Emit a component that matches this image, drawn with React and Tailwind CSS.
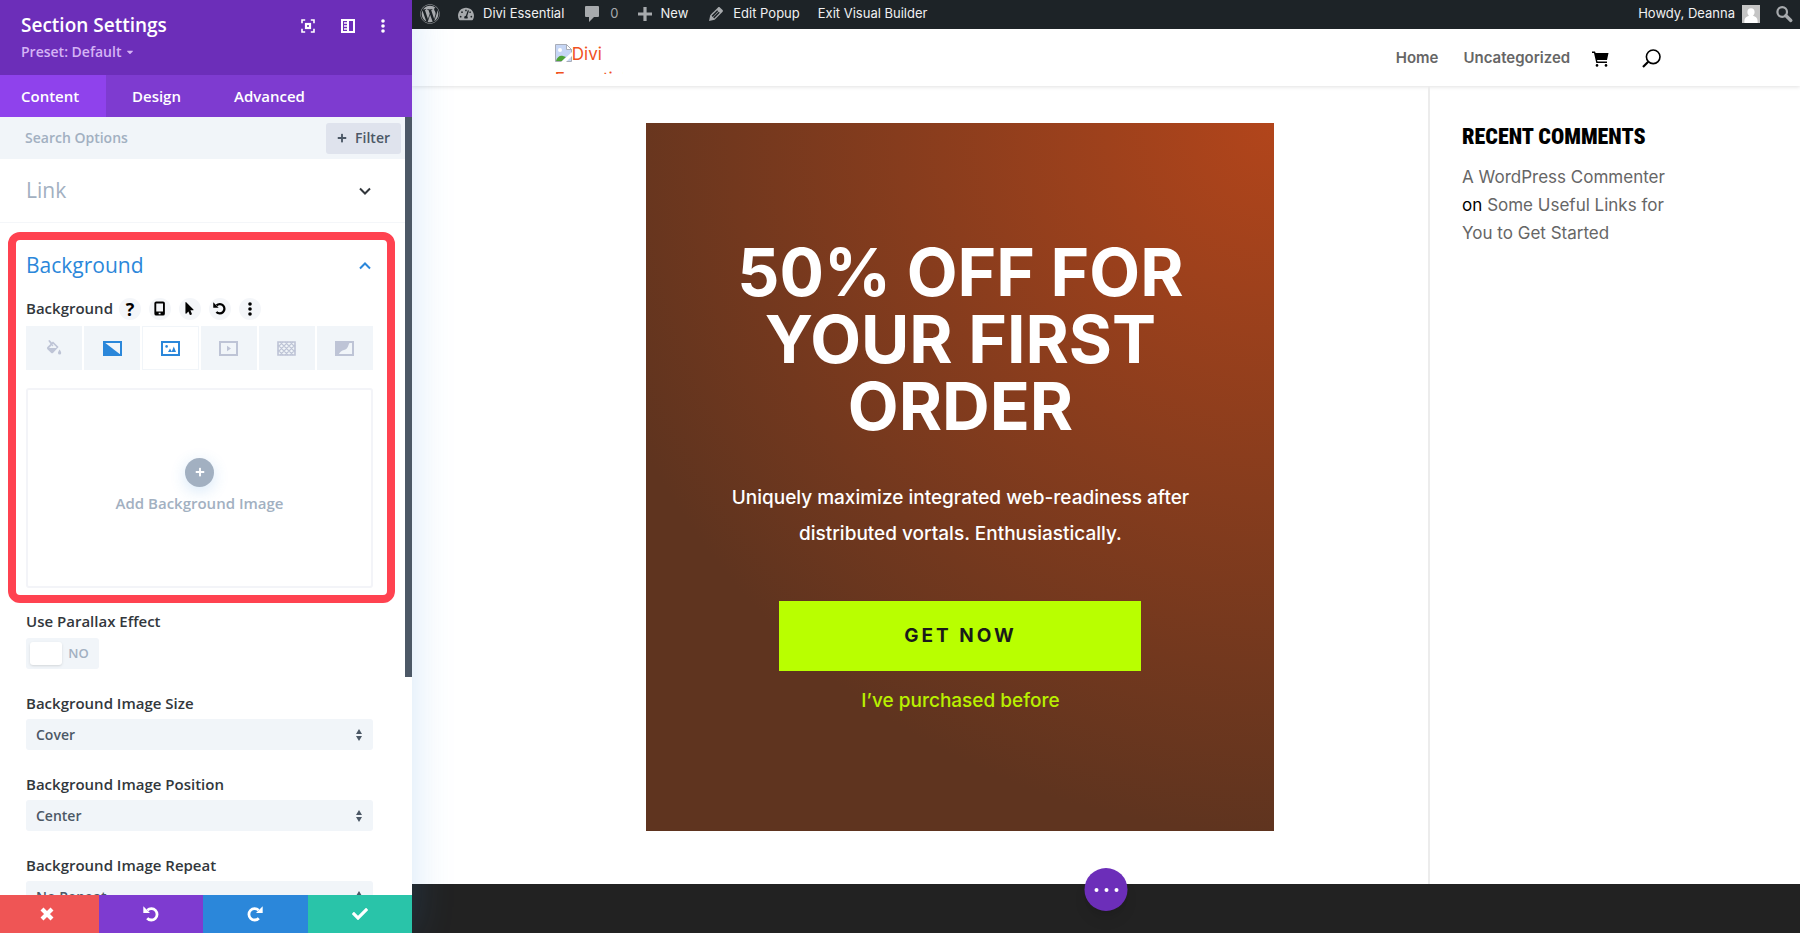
import { useState } from "react";
import {
  FaCaretDown,
  FaCheck,
  FaMousePointer,
  FaPlus,
  FaTachometerAlt,
  FaWordpress,
} from "react-icons/fa";

const sizes = ["Cover", "Fit", "Actual Size"];
const positions = ["Center", "Top Left", "Top Center", "Bottom Center"];
const repeats = ["No Repeat", "Repeat", "Space", "Round"];

const UndoIcon = ({ className }) => (
  <svg viewBox="0 0 16 16" className={className} fill="none" stroke="currentColor" strokeWidth="2.8" aria-hidden="true">
    <path d="M4.4 4.2A5.7 5.7 0 1 1 4.2 12.2" />
    <path d="M0.3 0.3V7H7z" fill="currentColor" stroke="none" />
  </svg>
);

const CloseIcon = () => (
  <svg viewBox="0 0 14 14" className="size-3.5" fill="none" stroke="currentColor" strokeWidth="4.2" aria-hidden="true">
    <path d="M2 2l10 10M12 2L2 12" />
  </svg>
);

const FocusIcon = () => (
  <svg viewBox="0 0 14 14" className="size-3.5" fill="none" stroke="currentColor" strokeWidth="1.6" aria-hidden="true">
    <path d="M1 4.2V1h3.2M9.8 1H13v3.2M13 9.8V13H9.8M4.2 13H1V9.8" />
    <rect x="5" y="5" width="4" height="4" strokeWidth="2.2" />
  </svg>
);

const PanelIcon = () => (
  <svg viewBox="0 0 14 14" className="size-3.5" fill="none" stroke="currentColor" strokeWidth="2" aria-hidden="true">
    <path d="M1 1h12v12H1zM7 1v12" />
    <path d="M3 4h3M3 7h3M3 10h3" strokeWidth="1.5" />
  </svg>
);

const DotsIcon = ({ className }) => (
  <svg viewBox="0 0 4 14" className={className} fill="currentColor" aria-hidden="true">
    <circle cx="2" cy="2" r="1.8" />
    <circle cx="2" cy="7" r="1.8" />
    <circle cx="2" cy="12" r="1.8" />
  </svg>
);

const PhoneIcon = () => (
  <svg viewBox="0 0 12 16" className="h-[15px]" aria-hidden="true">
    <path
      fillRule="evenodd"
      fill="currentColor"
      d="M2.4 0.5h7.2a2 2 0 0 1 2 2v11a2 2 0 0 1-2 2H2.4a2 2 0 0 1-2-2v-11a2 2 0 0 1 2-2zM2.4 2.6v8.6h7.2V2.6zM5 12.6v1.4h2v-1.4z"
    />
  </svg>
);

const Chevron = ({ up }) => (
  <svg viewBox="0 0 12 8" className="w-3" fill="none" stroke="currentColor" strokeWidth="2" aria-hidden="true">
    <path d={up ? "M1 6.5l5-5 5 5" : "M1 1.5l5 5 5-5"} />
  </svg>
);

const ColorIcon = () => (
  <svg viewBox="0 0 16 16" className="size-4" aria-hidden="true">
    <path
      fillRule="evenodd"
      fill="currentColor"
      d="M2.2 0.8L3.6 0l2.3 2.6L7 1.5l5.6 5.6-5.4 5.6a1.6 1.6 0 0 1-2.2 0L1.4 9.2a1.6 1.6 0 0 1 0-2.2l3.1-3.1zM5.8 5.2L3 8h7l.6-.7L7 3.8l-.6.6 1 1.2-.8.8z"
    />
    <path fill="currentColor" d="M13.6 9.6c1 1.5 1.6 2.4 1.6 3.4a1.6 1.6 0 0 1-3.2 0c0-1 .7-1.9 1.6-3.4z" />
  </svg>
);

const GradientIcon = () => (
  <svg viewBox="0 0 19 15" className="h-[15px]" aria-hidden="true">
    <path d="M1 1h17v13H1z" fill="none" stroke="currentColor" strokeWidth="2" />
    <path d="M1 1l17 13H1z" fill="currentColor" />
  </svg>
);

const ImageIcon = () => (
  <svg viewBox="0 0 19 15" className="h-[15px]" aria-hidden="true">
    <path d="M1 1h17v13H1z" fill="none" stroke="currentColor" strokeWidth="2" />
    <path d="M7 11l2-3.4L11 11zM10.6 11l2.2-5.6L15 11z" fill="currentColor" />
    <circle cx="5.6" cy="5.4" r="1.3" fill="currentColor" />
  </svg>
);

const VideoIcon = () => (
  <svg viewBox="0 0 19 15" className="h-[15px]" aria-hidden="true">
    <path d="M1 1h17v13H1z" fill="none" stroke="currentColor" strokeWidth="2" />
    <path d="M8 4.8l4 2.7-4 2.7z" fill="currentColor" />
  </svg>
);

const PatternIcon = () => (
  <svg viewBox="0 0 19 15" className="h-[15px]" fill="none" stroke="currentColor" aria-hidden="true">
    <path d="M1 1h17v13H1z" strokeWidth="1.6" />
    <path
      d="M1 6l5-5M1 11l10-10M3 14L16 1M8 14L18 4M13 14l5-5M1 9l5 5M1 4l10 10M3 1l13 13M8 1l10 10M13 1l5 5"
      strokeWidth="1.1"
    />
  </svg>
);

const MaskIcon = () => (
  <svg viewBox="0 0 19 15" className="h-[15px]" aria-hidden="true">
    <path d="M1 1h17v13H1z" fill="none" stroke="currentColor" strokeWidth="2" />
    <path d="M1 1h14c-1 1.5-1.5 3-2 4.5S11 8.5 9 9 4.5 11 3.5 14H1z" fill="currentColor" />
  </svg>
);

const backgroundTypes = [
  { name: "Background Color", Icon: ColorIcon },
  { name: "Background Gradient", Icon: GradientIcon, filled: true },
  { name: "Background Image", Icon: ImageIcon, filled: true },
  { name: "Background Video", Icon: VideoIcon },
  { name: "Background Pattern", Icon: PatternIcon },
  { name: "Background Mask", Icon: MaskIcon },
];

const fieldTools = [
  { name: "Help", icon: <span className="text-lg font-bold leading-none">?</span> },
  { name: "Responsive", icon: <PhoneIcon /> },
  { name: "Hover", icon: <FaMousePointer className="text-[13px]" /> },
  { name: "Reset", icon: <UndoIcon className="size-[13px]" /> },
  { name: "More", icon: <DotsIcon className="h-3.5" /> },
];

const SelectField = ({ id, label, options }) => (
  <div className="mb-6">
    <label htmlFor={id} className="block text-[15px] leading-5 font-semibold text-[#32373c] mb-1.5">
      {label}
    </label>
    <div className="relative">
      <select
        id={id}
        className="block w-full h-[31px] px-2.5 appearance-none rounded-[3px] bg-[#f1f5f9] text-sm font-semibold text-[#4c5866]"
      >
        {options.map((option) => (
          <option key={option}>{option}</option>
        ))}
      </select>
      <svg
        viewBox="0 0 6 12"
        className="absolute right-[11px] top-2.5 h-3 fill-[#4c5866] pointer-events-none"
        aria-hidden="true"
      >
        <path d="M0 5l3-5 3 5zM0 7l3 5 3-5z" />
      </svg>
    </div>
  </div>
);

const SettingsPanel = () => {
  const [activeType, setActiveType] = useState("Background Image");
  const [parallax, setParallax] = useState(false);

  return (
    <aside className="relative z-10 flex flex-col shrink-0 w-[412px] h-full bg-white font-['Open_Sans',sans-serif] shadow-[0_0_40px_rgba(43,135,218,0.2)]">
      <header className="flex justify-between h-[75px] shrink-0 pl-[21px] pr-[27px] pt-3 bg-[#6c2eb9] text-white">
        <div>
          <h2 className="text-[19px] leading-[27px] font-semibold">Section Settings</h2>
          <button className="flex items-center gap-1 text-sm leading-[26px] font-semibold text-[#d5b3f5]">
            Preset: Default <FaCaretDown className="text-[10px]" />
          </button>
        </div>
        <div className="flex items-center h-[27px] gap-[26px]">
          <button aria-label="Expand modal">
            <FocusIcon />
          </button>
          <button aria-label="Change modal position">
            <PanelIcon />
          </button>
          <button aria-label="More settings">
            <DotsIcon className="h-3.5" />
          </button>
        </div>
      </header>

      <nav className="flex h-[42px] shrink-0 bg-[#7e3bd0] text-[15px] font-semibold text-white">
        <button className="px-[21px] w-[106px] text-left bg-[#8f42ec]">Content</button>
        <button className="px-[26px]">Design</button>
        <button className="px-[27px]">Advanced</button>
      </nav>

      <div className="flex flex-1 min-h-0">
        <div className="flex-1 overflow-hidden">
          <div className="flex items-center h-[42px] pl-[25px] pr-1 bg-[#f1f5f9]">
            <input
              type="text"
              aria-label="Search Options"
              placeholder="Search Options"
              className="flex-1 min-w-0 text-sm font-semibold outline-none placeholder:text-[#a2b0c1]"
            />
            <button className="flex items-center gap-2 h-[31px] px-[11px] rounded-[3px] bg-[#dfe3ed] text-sm font-semibold text-[#4c5866]">
              <FaPlus className="text-[10px]" /> Filter
            </button>
          </div>

          <button className="flex items-center justify-between w-full h-16 pl-[26px] pr-[34px] border-b border-[#f4f6f9] text-[21px] text-[#a2b0c1]">
            Link
            <span className="text-[#32373c]">
              <Chevron />
            </span>
          </button>

          {/* Background group */}
          <section className="mt-[9px] ml-2 mr-2.5 border-8 border-[#ff4250] rounded-xl pl-2.5 pr-3.5 pb-[7px]">
            <button className="flex items-center justify-between w-full h-[51px] pr-0.5 text-[21px] text-[#2b87da]">
              Background
              <Chevron up />
            </button>
            <div className="flex items-center gap-1.5 h-[35px]">
              <h3 className="text-[15px] font-semibold text-[#32373c]">Background</h3>
              <div className="flex gap-2">
                {fieldTools.map(({ name, icon }) => (
                  <button
                    key={name}
                    aria-label={name}
                    className="flex items-center justify-center size-[22px] rounded-full bg-[#f4f6f9] text-black"
                  >
                    {icon}
                  </button>
                ))}
              </div>
            </div>
            <div className="grid grid-cols-6 gap-0.5 h-11 bg-white">
              {backgroundTypes.map(({ name, Icon, filled }) => (
                <button
                  key={name}
                  aria-label={name}
                  onClick={() => setActiveType(name)}
                  className={`flex items-center justify-center border border-[#f1f5f9] ${
                    activeType === name ? "bg-white" : "bg-[#f1f5f9]"
                  } ${filled ? "text-[#2b87da]" : "text-[#bec4d6]"}`}
                >
                  <Icon />
                </button>
              ))}
            </div>
            <button className="flex flex-col items-center justify-center gap-1.5 w-full h-[200px] mt-[18px] pb-1.5 border-2 border-[#f3f4f8] rounded-[3px] text-[15px] leading-5 font-semibold text-[#a2b0c1]">
              <span className="flex items-center justify-center size-[29px] rounded-full bg-[#a2b0c1] text-white shadow-[0_4px_16px_rgba(43,135,218,0.2)]">
                <FaPlus className="text-[10px]" />
              </span>
              Add Background Image
            </button>
          </section>

          <div className="pl-[26px] pr-8 pt-2">
            <div className="mb-6">
              <label htmlFor="parallax" className="block text-[15px] leading-5 font-semibold text-[#32373c] mb-[7px]">
                Use Parallax Effect
              </label>
              <div className="flex items-center w-[73px] h-[31px] p-1 rounded-[3px] bg-[#f1f5f9]">
                <input
                  id="parallax"
                  type="checkbox"
                  checked={parallax}
                  onChange={(e) => setParallax(e.target.checked)}
                  className="appearance-none w-8 h-[23px] rounded-[3px] bg-white shadow-sm checked:order-2"
                />
                <span className="flex-1 text-center text-[13px] font-semibold text-[#a2b0c1]">
                  {parallax ? "YES" : "NO"}
                </span>
              </div>
            </div>
            <SelectField id="bg-size" label="Background Image Size" options={sizes} />
            <SelectField id="bg-position" label="Background Image Position" options={positions} />
            <SelectField id="bg-repeat" label="Background Image Repeat" options={repeats} />
          </div>
        </div>

        <div className="w-[7px] shrink-0">
          <div className="h-[72%] bg-[#4c5866]" />
        </div>
      </div>

      <footer className="flex h-[38px] shrink-0 text-white">
        <button aria-label="Discard changes" className="w-[99px] pr-1.5 flex items-center justify-center bg-[#ef5555]">
          <CloseIcon />
        </button>
        <button aria-label="Undo" className="flex-1 flex items-center justify-center bg-[#7e3bd0]">
          <UndoIcon className="size-4" />
        </button>
        <button aria-label="Redo" className="flex-1 flex items-center justify-center bg-[#2b87da]">
          <UndoIcon className="size-4 -scale-x-100" />
        </button>
        <button aria-label="Save changes" className="flex-1 flex items-center justify-center bg-[#29c4a9]">
          <FaCheck className="text-base" />
        </button>
      </footer>
    </aside>
  );
};

const AdminBar = () => (
  <div className="relative z-20 flex items-center justify-between h-[29px] shrink-0 pl-2 pr-1.5 pb-0.5 bg-[#1d2327] text-[13px] text-[#f0f0f1]">
    <div className="flex items-center">
      <a href="#wordpress" aria-label="About WordPress" className="mr-[18px]">
        <FaWordpress className="text-xl text-[#a7aaad]" />
      </a>
      <a href="#site" className="flex items-center gap-[9px] mr-[18px]">
        <FaTachometerAlt className="text-base text-[#a7aaad]" /> Divi Essential
      </a>
      <a href="#comments" className="flex items-center gap-2 mr-[19px] text-[#a7aaad]">
        <svg viewBox="0 0 20 20" className="size-5 fill-current" aria-hidden="true">
          <path d="M4 2h12a1 1 0 0 1 1 1v9a1 1 0 0 1-1 1h-4l-5 5v-5H4a1 1 0 0 1-1-1V3a1 1 0 0 1 1-1z" />
        </svg>
        0
      </a>
      <a href="#new" className="flex items-center gap-[9px] mr-[18px]">
        <svg viewBox="0 0 14 14" className="size-3.5 fill-[#a7aaad]" aria-hidden="true">
          <path d="M5.4 0h3.2v5.4H14v3.2H8.6V14H5.4V8.6H0V5.4h5.4z" />
        </svg>
        New
      </a>
      <a href="#edit" className="flex items-center gap-[7px] mr-[18px]">
        <svg viewBox="0 0 20 20" className="size-5 fill-[#a7aaad]" aria-hidden="true">
          <path d="M13.89 3.39l2.71 2.72c.46.46.42 1.24.03 1.64l-8.01 8.02-5.56 1.16 1.16-5.58s7.6-7.63 7.99-8.03c.39-.39 1.22-.39 1.68.07zm-2.73 2.79l-5.59 5.61 1.11 1.11 5.54-5.65zm-2.97 8.23l5.58-5.6-1.07-1.08-5.59 5.6z" />
        </svg>
        Edit Popup
      </a>
      <a href="#exit">Exit Visual Builder</a>
    </div>
    <div className="flex items-center">
      <a href="#profile" className="flex items-center gap-[7px] mr-3.5">
        Howdy, Deanna
        <svg viewBox="0 0 18 18" className="size-[18px]" aria-hidden="true">
          <path fill="#c5c5c5" d="M0 0h18v18H0z" />
          <path fill="#fff" d="M9 3.2c2.3 0 3.6 1.7 3.6 3.8 0 1.7-.8 3-1.6 3.8 2.6.8 4.6 2.4 4.6 5.2v2H2.4v-2c0-2.8 2-4.4 4.6-5.2-.8-.8-1.6-2.1-1.6-3.8 0-2.1 1.3-3.8 3.6-3.8z" />
        </svg>
      </a>
      <button aria-label="Search">
        <svg viewBox="0 0 20 20" className="size-5" fill="none" stroke="#a7aaad" aria-hidden="true">
          <circle cx="8.2" cy="8" r="4.8" strokeWidth="2.2" />
          <path d="M11.8 11.6l5 4.8" strokeWidth="3.4" strokeLinecap="round" />
        </svg>
      </button>
    </div>
  </div>
);

const SiteHeader = () => (
  <header className="h-[57px] shrink-0 shadow-[0_1px_4px_rgba(0,0,0,0.12)]">
    <div className="flex items-center justify-between w-4/5 h-full mx-auto">
      <a href="#home" className="block w-[68px] h-8 ml-1 overflow-hidden text-[17px] leading-[25px] text-[#f0521d]">
        <svg viewBox="0 0 17 18" className="inline-block h-[18px] align-[-2px]" aria-hidden="true">
          <path d="M0.5 0.5h11l5 5v12h-16z" fill="#c6d6f5" stroke="#a9adb8" />
          <path d="M11.5 0.5v5h5z" fill="#fff" stroke="#a9adb8" />
          <circle cx="5" cy="6" r="2" fill="#fff" />
          <path d="M1 17c1-4 4-6 7-5l3 1-4 4z" fill="#4da336" />
          <path d="M6 18L17 8v4l-6 6z" fill="#fff" />
        </svg>
        Divi Essential
      </a>
      <nav className="flex items-center pt-0.5 text-[15px] font-semibold text-[#666]">
        <a href="#home" className="mr-[25px]">
          Home
        </a>
        <a href="#uncategorized" className="mr-[22px]">
          Uncategorized
        </a>
        <a href="#cart" aria-label="Cart" className="mr-[33px] text-black">
          <svg viewBox="0 0 17 16" className="h-4 fill-current" aria-hidden="true">
            <path d="M0 0.5h3l.6 1.5H16.5l-1.5 7H5l.5 1.5H15V12H4.3L2 2H0z" />
            <circle cx="5" cy="14.4" r="1.3" />
            <circle cx="14" cy="14.4" r="1.3" />
          </svg>
        </a>
        <button aria-label="Search" className="text-black">
          <svg viewBox="0 0 19 19" className="size-[19px]" fill="none" stroke="currentColor" aria-hidden="true">
            <circle cx="11.2" cy="7.8" r="6.8" strokeWidth="1.6" />
            <path d="M6.2 12.8L1 18" strokeWidth="2.2" />
          </svg>
        </button>
      </nav>
    </div>
  </header>
);

const Popup = () => (
  <div className="w-full max-w-[628px] h-[708px] px-[70px] pt-[116px] text-center text-white bg-[radial-gradient(circle_at_top_right,#b2451b_0%,#5f341f_75%)]">
    <h1 className="text-[66px] leading-[67px] font-bold">50% OFF FOR YOUR FIRST ORDER</h1>
    <p className="mt-10 text-[19px] leading-9 font-medium">
      Uniquely maximize integrated web-readiness after distributed vortals. Enthusiastically.
    </p>
    <a
      href="#get"
      className="flex items-center justify-center w-[362px] h-[70px] mx-auto mt-[49px] bg-[#b9ff00] text-[19px] font-bold tracking-[3px] text-[#1a1a1a]"
    >
      GET NOW
    </a>
    <a href="#purchased" className="block mt-3 text-[19px] leading-9 font-medium text-[#b9f000]">
      I’ve purchased before
    </a>
  </div>
);

const Page = () => (
  <div className="flex flex-col flex-1 min-w-0 bg-white font-['Inter',sans-serif]">
    <AdminBar />
    <SiteHeader />
    <main className="flex flex-1 min-h-0 ml-[10%] mr-[9%]">
      <div className="flex justify-center flex-1 pr-[58px] pt-[37px]">
        <Popup />
      </div>
      <aside className="w-[247px] shrink-0 pt-[37px] pl-8 border-l-2 border-[#ececec]">
        <h4 className="text-[22px] leading-7 font-black text-black font-['Roboto_Condensed','Roboto',sans-serif]">
          RECENT COMMENTS
        </h4>
        <p className="mt-3 text-[17px] leading-7 text-[#666]">
          <a href="#commenter">A WordPress Commenter</a> <span className="text-black">on</span>{" "}
          <a href="#post">Some Useful Links for You to Get Started</a>
        </p>
      </aside>
    </main>
    <footer className="relative h-[49px] shrink-0 bg-[#222]">
      <button
        aria-label="Page settings"
        className="absolute left-1/2 -translate-x-1/2 -top-4 flex items-center justify-center gap-1.5 size-[43px] rounded-full bg-[#6c2eb9] shadow-lg"
      >
        <span className="size-1 rounded-full bg-white" />
        <span className="size-1 rounded-full bg-white" />
        <span className="size-1 rounded-full bg-white" />
      </button>
    </footer>
  </div>
);

const App = () => (
  <div className="flex h-screen overflow-hidden">
    <SettingsPanel />
    <Page />
  </div>
);

export default App;
